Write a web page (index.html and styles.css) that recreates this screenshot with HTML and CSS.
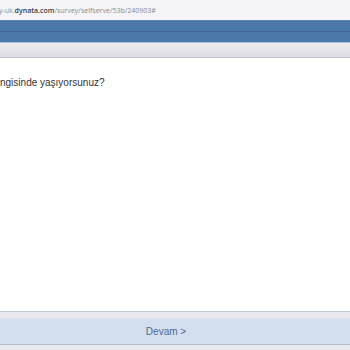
FILE: index.html
```html
<!DOCTYPE html>
<html>
<head>
<meta charset="utf-8">
<link rel="stylesheet" href="styles.css">
</head>
<body>
<div class="page">
  <div class="urlbar"><span class="url">y-uk.<b>dynata.com</b>/survey/selfserve/53b/240903#</span></div>
  <div class="bluebar"><div class="blue-top"></div><div class="blue-bottom"></div></div>
  <div class="graybar"></div>
  <div class="content">
    <div class="question">ngisinde yaşıyorsunuz?</div>
  </div>
  <div class="footer">
    <div class="footer-top"></div>
    <div class="footer-btn"><span class="devam">Devam &gt;</span></div>
    <div class="footer-bottom"></div>
  </div>
</div>
</body>
</html>
```
FILE: styles.css
```css
html, body { margin: 0; padding: 0; }
body { width: 350px; height: 350px; overflow: hidden; background: #fff; font-family: "Liberation Sans", Arial, sans-serif; }
.page { display: flex; flex-direction: column; height: 350px; }
.urlbar { height: 20px; background: #f5f5f7; display: flex; align-items: center; }
.url { font-family: "Open Sans", "Liberation Sans", sans-serif; font-size: 7px; color: #8a8a8e; margin-left: -1px; }
.url b { color: #3a3a3e; font-weight: 600; }
.bluebar { height: 22px; background: #4a76a8; display: flex; flex-direction: column; border-top: 1px solid #5a86b8; }
.blue-top { height: 10px; border-bottom: 1px solid #3f6593; }
.blue-bottom { flex: 1; border-bottom: 1px solid #a8c2de; }
.graybar { height: 14px; background: linear-gradient(#ececf0, #dcdce2); border-bottom: 1px solid #c4c4cc; }
.content { flex: 1; padding-top: 18px; }
.question { font-size: 10px; color: #333; line-height: 14px; }
.footer { display: flex; flex-direction: column; }
.footer-top { height: 6px; background: #e8eaee; border-top: 1px solid #c4c9d2; }
.footer-btn { height: 25px; background: #d3deee; border-top: 1px solid #dfe5ee; border-bottom: 1px solid #b6bdc8; display: flex; align-items: center; justify-content: center; }
.devam { font-size: 10px; color: #4d6a94; margin-right: 18px; }
.footer-bottom { height: 5px; background: #e8eaee; }
```
